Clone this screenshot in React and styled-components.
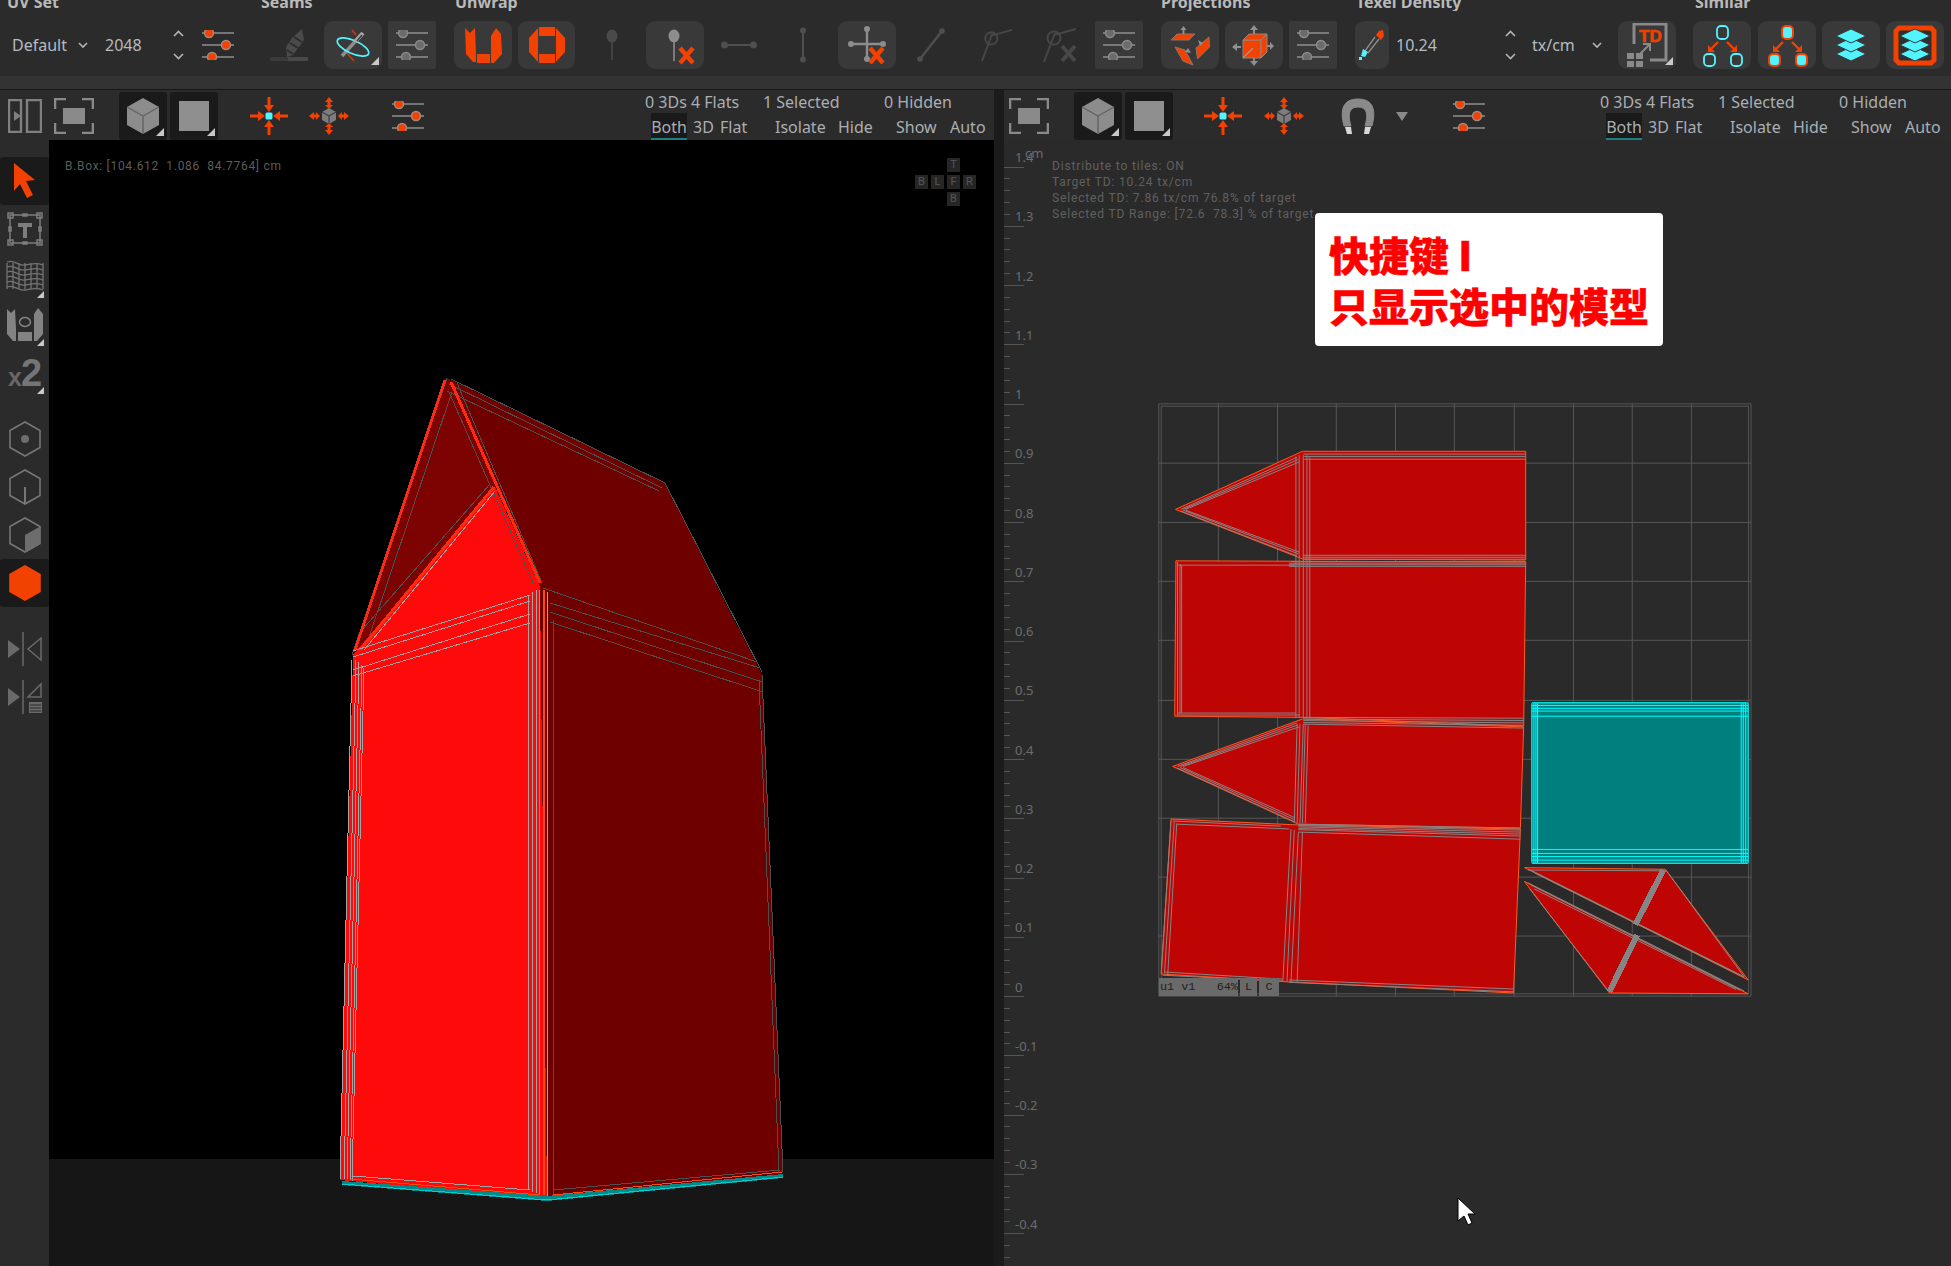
import React from 'react';
import styled, { createGlobalStyle } from 'styled-components';

const OR = '#f24100', CY = '#52f4ff', GR = '#8a8a8a', DG = '#4c4c4c';

const Global = createGlobalStyle`
  html, body { margin: 0; padding: 0; background: #2b2b2b; overflow: hidden; }
  * { box-sizing: border-box; }
`;
const Page = styled.div`
  width: 1951px; height: 1266px; display: flex; flex-direction: column; overflow: hidden;
  background: #2b2b2b; font-family: "Noto Sans", "Noto Sans CJK SC", sans-serif; color: #b4bbc0;
`;
const TopBar = styled.header`
  height: 90px; flex: none; background: #2b2b2b; display: flex; flex-direction: column;
  border-bottom: 1px solid #171717;
`;
const LabelRow = styled.div`
  height: 11px; display: flex; padding-left: 7px; overflow: hidden; flex: none;
`;
const GroupLabel = styled.span`
  width: ${p => p.$w || 120}px; flex: none; font-size: 16px; font-weight: 700; line-height: 16px;
  margin-top: -6px; color: #b9b9b9; white-space: nowrap;
`;
const ToolRow = styled.div`
  height: 48px; margin-top: 10px; display: flex; align-items: center; flex: none;
`;
const Strip = styled.div` margin-top: 7px; height: 13px; background: #333; flex: none; `;
const Tool = styled.div`
  position: relative; flex: none; width: ${p => p.$w}px; height: 48px; margin-left: ${p => p.$ml || 0}px;
  display: flex; align-items: center; justify-content: center;
  background: ${p => ({ round: '#393939', square: '#393939', dark: '#1a1a1a' }[p.$v] || 'transparent')};
  border-radius: ${p => ({ round: '9px', square: '2px', dark: '3px' }[p.$v] || '0')};
  ${p => p.$corner ? `&::after { content: ''; position: absolute; right: 3px; bottom: 4px; width: 0; height: 0;
    border-left: 8px solid transparent; border-bottom: 8px solid #c9c9c9; }` : ''}
`;
const Value = styled.span`
  flex: none; width: ${p => p.$w}px; margin-left: ${p => p.$ml || 0}px; font-size: 16px; white-space: nowrap;
`;
const Workspace = styled.main` flex: 1; display: flex; min-height: 0; `;
const LeftPane = styled.section` width: 994px; flex: none; display: flex; flex-direction: column; `;
const Divider = styled.div` width: 10px; flex: none; background: #1b1b1b; `;
const RightPane = styled.section` flex: 1; display: flex; flex-direction: column; min-width: 0; `;
const ViewBar = styled.div`
  height: 50px; flex: none; display: flex; align-items: flex-end; background: #2b2b2b;
`;
const StatsBox = styled.div`
  margin-left: ${p => p.$ml}px; flex: none; height: 50px; display: flex; flex-direction: column; font-size: 16px;
  color: #a9afb3; line-height: 24px; white-space: nowrap;
`;
const StatRow = styled.div` display: flex; height: ${p => p.$h}px; align-items: center; `;
const StatCell = styled.span` width: ${p => p.$w}px; flex: none; `;
const Tab = styled.span`
  flex: none; width: ${p => p.$w}px; margin-left: ${p => p.$ml || 0}px; height: 27px; line-height: 24px; padding-top: 2px;
  ${p => p.$on ? `background: #1a1a1a; border-bottom: 2px solid #1f7f80; text-align: center;` : ''}
`;
const Stage = styled.div` flex: 1; display: flex; min-height: 0; `;
const Rail = styled.nav`
  width: 49px; flex: none; background: #2b2b2b; padding-top: 17px; display: flex; flex-direction: column;
`;
const RailItem = styled.div`
  position: relative; height: 48px; flex: none; display: flex; align-items: center; justify-content: center;
  margin-top: ${p => p.$mt || 0}px; background: ${p => p.$on ? '#1a1a1a' : 'transparent'}; border-radius: 3px;
  ${p => p.$corner ? `&::after { content: ''; position: absolute; right: 5px; bottom: 3px; width: 0; height: 0;
    border-left: 7px solid transparent; border-bottom: 7px solid #c9c9c9; }` : ''}
`;
const TimesTwo = styled.span`
  font-family: "Liberation Sans", sans-serif; font-weight: 700; color: #757575; font-size: 38px; line-height: 1; letter-spacing: -1px;
  & > small { font-size: 25px; color: #666; }
`;
const Viewport = styled.div` position: relative; flex: 1; display: flex; flex-direction: column; overflow: hidden; `;
const Sky = styled.div` height: 1019px; background: #000; flex: none; `;
const Floor = styled.div` flex: 1; background: #161616; `;
const Drawing = styled.svg`
  position: absolute; left: ${p => p.$l || 0}px; top: ${p => p.$t || 0}px; display: block; overflow: hidden;
  shape-rendering: crispEdges;
  & * { vector-effect: non-scaling-stroke; }
`;
const BBox = styled.div`
  position: absolute; left: 16px; top: 18px; font: 12px/16px "Roboto", sans-serif; letter-spacing: .7px; color: #5c5c5c; white-space: pre;
`;
const NavCube = styled.div`
  position: absolute; left: 866px; top: 18px; display: grid; grid-template-columns: repeat(4, 13px);
  grid-auto-rows: 14px; gap: 3px; font: 11px/14px "Roboto", sans-serif; color: #565656; text-align: center;
`;
const NavFace = styled.span`
  grid-column: ${p => p.$c}; grid-row: ${p => p.$r}; background: #262626;
`;
const UVCanvas = styled.div` position: relative; flex: 1; background: #2a2a2a; overflow: hidden; `;
const Info = styled.div`
  position: absolute; left: 48px; top: 18px; font: 12px/16px "Roboto", sans-serif; letter-spacing: .85px; color: #606060; white-space: pre;
`;
const Callout = styled.div`
  position: absolute; left: 311px; top: 73px; width: 348px; height: 133px; background: #fff; border-radius: 4px;
  padding: 16px 0 0 14px; color: #fe0000; font: 900 40px/51px "Noto Sans CJK SC", sans-serif; white-space: nowrap;
  -webkit-text-stroke: .5px #fe0000;
`;
const UVTag = styled.div`
  position: absolute; left: 155px; top: 838px; height: 18px; display: flex; gap: 2px;
  font: 11.800px/18px "Liberation Mono", monospace; color: #1f1f1f;
`;
const TagCell = styled.span`
  width: ${p => p.$w}px; background: #6a6a6a; padding: 0 1px; white-space: pre; text-align: ${p => p.$c ? 'center' : 'left'};
`;
const Cursor = styled.svg` position: absolute; left: 452px; top: 1057px; `;

/* ---------- icons ---------- */
const Chevron = () => <svg width="10" height="7" viewBox="0 0 10 7"><path d="M1 1l4 4 4-4" fill="none" stroke="#b0b6ba" strokeWidth="1.6" /></svg>;
const Stepper = () => (
  <svg width="11" height="30" viewBox="0 0 11 30" fill="none" stroke="#b0b6ba" strokeWidth="1.6">
    <path d="M1 6l4.500-4.500L10 6M1 24l4.500 4.500L10 24" />
  </svg>
);
const Sliders = ({ tone = 'orange' }) => {
  const dot = tone === 'orange'
    ? { fill: OR, stroke: '#a38a80', strokeWidth: 1.5, r: 4.5 }
    : { fill: '#6c6c6c', stroke: '#8a8a8a', strokeWidth: 1.5, r: 4.5 };
  return (
    <svg width="34" height="30" viewBox="0 0 34 30">
      <path d="M1 3h32M1 15h32M1 27h32" stroke="#8f8f8f" strokeWidth="1.6" />
      <circle cx="8" cy="3" {...dot} /><circle cx="25" cy="15" {...dot} /><circle cx="11" cy="27" {...dot} />
    </svg>
  );
};
const Feather = () => (
  <svg width="38" height="34" viewBox="0 0 38 34">
    <path d="M0 29h18v4H0z" fill="#3a3a3a" /><path d="M18 29h20v4H18z" fill="#484848" />
    <path d="M32 1l2 11-11 15-6 2-1-10 6-9z" fill="#4a4a4a" />
    <path d="M24 9l8 5M20 15l8 5M17 22l6 4" stroke="#2b2b2b" strokeWidth="1.6" />
  </svg>
);
const Needle = () => (
  <svg width="58" height="48" viewBox="0 0 58 48">
    <path d="M28 9l4 5M23 32l7 8" stroke="#c43a10" strokeWidth="1.8" />
    <path d="M38 13L18 35" stroke="#8d8d8d" strokeWidth="3.400" />
    <ellipse cx="29" cy="26" rx="17" ry="6.500" transform="rotate(24 29 26)" fill="none" stroke={CY} strokeWidth="1.700" />
    <path d="M39 12l-8 9" stroke="#a8a8a8" strokeWidth="4" /><path d="M38 14l-5 6" stroke="#393939" strokeWidth="1.400" />
  </svg>
);
const UIcon = () => (
  <svg width="37" height="36" viewBox="0 0 37 36" fill={OR}>
    <path d="M0 1l5 5 5-5 1 25v9H8L1 27z" /><path d="M12 27h13v9H12z" /><path d="M37 27l-8 9h-3V9l5-8 5 6z" />
  </svg>
);
const OIcon = () => (
  <svg width="36" height="36" viewBox="0 0 36 36" fill={OR}>
    <path d="M10 0h16v9H10zM10 27h16v9H10zM9 1v34L0 25V11zM27 1v34l9-10V11z" />
  </svg>
);
const Pin = () => (
  <svg width="24" height="38" viewBox="0 0 24 38">
    <path d="M12 10v24" stroke="#4a4a4a" strokeWidth="1.6" /><ellipse cx="12" cy="10" rx="5.500" ry="6.500" fill="#4a4a4a" />
  </svg>
);
const Cross = ({ x, y }) => <path d={`M${x + 1} ${y + 1}l13 15M${x + 14} ${y + 1}l-13 15`} stroke={OR} strokeWidth="4.500" fill="none" />;
const PinX = () => (
  <svg width="58" height="48" viewBox="0 0 58 48">
    <path d="M28 15v25" stroke="#8d8d8d" strokeWidth="1.6" /><ellipse cx="28" cy="15" rx="5.500" ry="6.500" fill="#8d8d8d" />
    <Cross x={33} y={26} />
  </svg>
);
const HBar = () => (
  <svg width="36" height="10" viewBox="0 0 36 10" fill="#4f4f4f"><path d="M2 4h32v2H2z" /><circle cx="3.500" cy="5" r="3.500" /><circle cx="32.500" cy="5" r="3.500" /></svg>
);
const VBar = () => (
  <svg width="10" height="36" viewBox="0 0 10 36" fill="#4f4f4f"><path d="M4 2h2v32H4z" /><circle cx="5" cy="3.500" r="3" /><circle cx="5" cy="32.500" r="3" /></svg>
);
const PlusX = () => (
  <svg width="38" height="38" viewBox="0 0 38 38">
    <path d="M19 2v32M2 18h34" stroke="#8d8d8d" strokeWidth="2.400" />
    <g fill="#8d8d8d"><circle cx="19" cy="3" r="3" /><circle cx="19" cy="33" r="3" /><circle cx="3" cy="18" r="3" /><circle cx="35" cy="18" r="3" /></g>
    <Cross x={21} y={21} />
  </svg>
);
const Diag = () => <svg width="28" height="34" viewBox="0 0 28 34"><path d="M3 31L25 3" stroke="#4f4f4f" strokeWidth="2.400" /><circle cx="3" cy="31" r="2.800" fill="#4f4f4f" /><circle cx="25" cy="3" r="2.800" fill="#4f4f4f" /></svg>;
const Loop = ({ x }) => (
  <svg width="36" height="36" viewBox="0 0 36 36" fill="none" stroke="#474747" strokeWidth="2">
    <circle cx="12" cy="11" r="6.500" /><path d="M2 35L13 6M12 8l22-6" />
    {x && <path d="M20 19l13 15M33 19L20 34" strokeWidth="4" />}
  </svg>
);
const Proj1 = () => (
  <svg width="58" height="48" viewBox="0 0 58 48">
    <g fill={OR} stroke="#8b7468" strokeWidth="1">
      <path d="M16 13h18l-6 6H10z" /><path d="M48 16l.5 10-12 12L35 27z" /><path d="M14 26l10 3 8 15-10-4z" />
    </g>
    <path d="M22.500 5l-3 4h2v4h2V9h2zM37 19l5 3-3 3zM30 32l-6-1 3-4z" fill="#8f8f8f" />
  </svg>
);
const Proj2 = () => (
  <svg width="58" height="48" viewBox="0 0 58 48">
    <path d="M29 4l-4 5h3v6h2V9h3zM28 37v3h-3l4 5 4-5h-3v-3zM16 25h-4v-3l-5 4 5 4v-3h4zM41 24h4v-3l4 4-4 4v-3h-4z" fill="#8f8f8f" />
    <g fill={OR} stroke="#9a8478" strokeWidth="1"><path d="M18 19h18v18H18z" /><path d="M18 19l6-6h18l-6 6zM36 19l6-6v18l-6 6z" /></g>
    <path d="M18 37l10-10" stroke="#a79487" strokeWidth="1.500" />
  </svg>
);
const Dropper = () => (
  <svg width="34" height="48" viewBox="0 0 34 48">
    <path d="M20 16L10 30M24 18L13 32" stroke="#8d8d8d" strokeWidth="1.300" fill="none" />
    <path d="M21 14l5 5 3-4-1-6-4 1z" fill={OR} />
    <path d="M8 28l5 3-3 5-4-1z" fill={CY} /><path d="M4 36h3v3H4z" fill={CY} />
  </svg>
);
const TDIcon = () => (
  <svg width="42" height="44" viewBox="0 0 42 44">
    <path d="M8 21V1h32v36H24" fill="none" stroke="#8a8a8a" strokeWidth="3" />
    <path d="M1 30h7v6H1zM10 30h7v6h-7zM1 38h7v6H1zM10 38h7v6h-7z" fill="#8a8a8a" />
    <path d="M14 31l9-9M17 21h7v7" fill="none" stroke="#8a8a8a" strokeWidth="2" />
    <text x="13" y="19" fontFamily="Liberation Sans" fontWeight="700" fontSize="17" fill={OR} stroke={OR} strokeWidth=".6">TD</text>
  </svg>
);
const Similar = ({ filled }) => {
  const box = filled ? { fill: CY, stroke: OR, strokeWidth: 2 } : { fill: 'none', stroke: CY, strokeWidth: 1.8 };
  return (
    <svg width="58" height="48" viewBox="0 0 58 48">
      <rect x="24" y="5" width="11" height="13" rx="4" {...box} />
      <rect x="11" y="33" width="11" height="12" rx="4" {...box} /><rect x="38" y="33" width="11" height="12" rx="4" {...box} />
      <path d="M25 21l-7 7M34 21l7 7" stroke={OR} strokeWidth="2.400" />
      <path d="M15 24v7h7zM44 24v7h-7z" fill={OR} />
    </svg>
  );
};
const Layers = ({ framed }) => (
  <svg width="58" height="48" viewBox="0 0 58 48">
    {framed && <path d="M13 7h32l3 3v29l-3 3H13l-3-3V10z" fill="#2f2f2f" stroke={OR} strokeWidth="5" />}
    <path d="M29 26l15 7-15 7-15-7z" fill={CY} stroke="#393939" />
    <path d="M29 17l15 7-15 7-15-7z" fill={CY} stroke="#393939" />
    <path d="M29 8l15 7-15 7-15-7z" fill={CY} stroke="#393939" />
  </svg>
);
const PanelToggle = () => (
  <svg width="34" height="34" viewBox="0 0 34 34" fill="none" stroke="#7f7f7f" strokeWidth="2.400">
    <path d="M1 1h12v32H1zM19 1h14v32H19z" /><path d="M6 12l7 5-7 5z" fill="#7f7f7f" stroke="none" />
  </svg>
);
const Focus = () => (
  <svg width="40" height="36" viewBox="0 0 40 36">
    <path d="M1 11V1h11M28 1h11v10M39 25v10H28M12 35H1V25" fill="none" stroke="#8a8a8a" strokeWidth="2.600" />
    <path d="M9 10h22v16H9z" fill="#8a8a8a" />
  </svg>
);
const Cube = () => (
  <svg width="36" height="38" viewBox="0 0 36 38">
    <path d="M18 1l16 9v18l-16 9-16-9V10z" fill="#8c8c8c" />
    <path d="M18 19v18M18 19L2 10M18 19l16-9" stroke="#626262" strokeWidth="1.400" fill="none" />
  </svg>
);
const Square = () => <svg width="30" height="30" viewBox="0 0 30 30"><path d="M0 0h30v30H0z" fill="#8f8f8f" /></svg>;
const Arrows = ({ c }) => (
  <g fill={OR} stroke="none">
    <path d={`M${c - 1.500} 1h3v8h3.500l-5 7-5-7h3.500z`} /><path d={`M${c - 1.500} ${2 * c - 1}h3v-8h3.500l-5-7-5 7h3.500z`} />
    <path d={`M1 ${c - 1.500}v3h8v3.500l7-5-7-5v3.500z`} /><path d={`M${2 * c - 1} ${c - 1.500}v3h-8v3.500l-7-5 7-5v3.500z`} />
  </g>
);
const Target = () => (
  <svg width="40" height="40" viewBox="0 0 40 40"><Arrows c={20} /><rect x="16.500" y="16.500" width="7" height="7" rx="1.500" fill={CY} /></svg>
);
const TargetCube = () => (
  <svg width="40" height="40" viewBox="0 0 40 40">
    <path d="M20 1l-4 5h2.500v3H16l4 4 4-4h-2.500V6H24zM20 39l-4-5h2.500v-3H16l4-4 4 4h-2.500v3H24zM0 20l5-4v2.500h2V16l4 4-4 4v-2.500H5V24zM40 20l-5-4v2.500h-2V16l-4 4 4 4v-2.500h2V24z" fill={OR} />
    <path d="M20 12l7 4v8l-7 4-7-4v-8z" fill="#7d7d7d" /><path d="M20 20v8M20 20l-7-4M20 20l7-4" stroke="#3d3d3d" strokeWidth="1.200" fill="none" />
  </svg>
);
const Magnet = () => (
  <svg width="36" height="38" viewBox="0 0 36 38">
    <path d="M4 29C0 14 2 2 18 2s18 12 14 27h-7c3-10 3-19-7-19s-10 9-7 19z" fill="#8a8a8a" stroke="#8a8a8a" />
    <path d="M5 30h6l1 7H7zM25 30h6l-2 7h-5z" fill="#d8d8d8" />
  </svg>
);
const DownTri = () => <svg width="12" height="9" viewBox="0 0 12 9"><path d="M0 0h12L6 9z" fill="#8a8a8a" /></svg>;
const SelectArrow = () => (
  <svg width="24" height="36" viewBox="0 0 24 36"><path d="M1 0l21 17-9 1 7 14-6 3-7-14-6 7z" fill={OR} /></svg>
);
const TFrame = () => (
  <svg width="36" height="34" viewBox="0 0 36 34" fill="none" stroke="#7d7d7d" strokeWidth="1.500">
    <path d="M3 3h30v28H3z" /><path d="M1 1h5v5H1zM30 1h5v5h-5zM1 28h5v5H1zM30 28h5v5h-5z" />
    <path d="M16 2h4v2h-4zM16 30h4v2h-4zM2 15h2v4H2zM32 15h2v4h-2z" fill="#7d7d7d" />
    <path d="M11 11h14v4h-5v11h-4V15h-5z" fill="#7d7d7d" stroke="none" />
  </svg>
);
const Wave = () => (
  <svg width="38" height="34" viewBox="0 0 38 34" fill="none" stroke="#737373" strokeWidth="1.300">
    {[0, 5, 10, 15, 20, 25].map(o => <path key={o} d={`M1 ${2 + o}c8-3 10 4 18 3s10-3 18 0`} />)}
    {[1, 7, 13, 19, 25, 31, 37].map(x => <path key={x} d={`M${x} 3v26`} />)}
  </svg>
);
const UnwrapRail = () => (
  <svg width="36" height="34" viewBox="0 0 36 34" fill="#838383">
    <path d="M0 1l4 4 4-4 1 20v12H6l-6-7zM11 24h14v9H11zM36 26l-6 7h-3V6l4-6 5 6z" />
    <ellipse cx="18" cy="14" rx="5.500" ry="4.500" fill="none" stroke="#838383" strokeWidth="1.500" />
  </svg>
);
const Hex = ({ mode }) => {
  const c = mode === 'on' ? OR : '#767676';
  return (
    <svg width="32" height="36" viewBox="0 0 32 36">
      <path d="M16 1l15 8.500v17L16 35 1 26.500v-17z" fill={mode === 'on' ? OR : 'none'} stroke={c} strokeWidth="1.600" />
      {mode === 'dot' && <circle cx="16" cy="18" r="4" fill="#6d6d6d" />}
      {mode === 'edge' && <path d="M16 18v17" stroke={c} strokeWidth="2" />}
      {mode === 'face' && <path d="M16 18l15-8.500v17L16 35z" fill="#6d6d6d" />}
    </svg>
  );
};
const Mirror = ({ list }) => (
  <svg width="36" height="34" viewBox="0 0 36 34">
    <path d="M1 8l12 9-12 9z" fill="#6a6a6a" /><path d="M16 0v34" stroke="#6a6a6a" strokeWidth="1.500" />
    {list ? (
      <g><path d="M34 4v13H21z" fill="none" stroke="#6a6a6a" strokeWidth="1.500" /><path d="M22 22h13v11H22z" fill="#6a6a6a" /><path d="M23 25h11M23 28h11M23 31h11" stroke="#2b2b2b" /></g>
    ) : <path d="M34 6v22L21 17z" fill="none" stroke="#6a6a6a" strokeWidth="1.500" />}
  </svg>
);

const Stats = ({ ml }) => (
  <StatsBox $ml={ml}>
    <StatRow $h={23}>
      <StatCell $w={118}>0 3Ds 4 Flats</StatCell><StatCell $w={121}>1 Selected</StatCell><StatCell $w={80}>0 Hidden</StatCell>
    </StatRow>
    <StatRow $h={27}>
      <Tab $on $w={36} $ml={6}>Both</Tab><Tab $w={27} $ml={6}>3D</Tab><Tab $w={55}>Flat</Tab>
      <Tab $w={63}>Isolate</Tab><Tab $w={58}>Hide</Tab><Tab $w={54}>Show</Tab><Tab $w={40}>Auto</Tab>
    </StatRow>
  </StatsBox>
);

/* ---------- 3D model, in page coordinates ---------- */
const lines = (list, color, w = 1) => list.map((l, i) => (
  <line key={color + w + i} x1={l[0]} y1={l[1]} x2={l[2]} y2={l[3]} stroke={color} strokeWidth={w} />
));
const LIGHT = [
  [353, 651, 530, 595], [353, 657, 530, 601], [353, 670, 530, 614], [353, 676, 530, 623],
  [528, 595, 528, 1190], [532, 592, 532, 1192], [536, 590, 536, 1193], [539, 590, 539, 1194], [547, 592, 547, 1197],
  [352, 660, 340, 1180], [356, 660, 344, 1180], [359, 662, 347, 1180], [362, 665, 350, 1181], [364, 668, 352, 1182],
  [353, 1176, 530, 1190], [364, 650, 495, 491],
];
const DARK = [
  [543, 588, 757, 662], [550, 603, 760, 668], [550, 612, 762, 682], [550, 622, 763, 692],
  [553, 620, 553, 1197], [553, 1190, 780, 1170],
  [451, 379, 665, 483], [449, 384, 662, 488], [447, 391, 659, 491],
  [665, 483, 762, 672], [762, 675, 783, 1172], [759, 680, 779, 1172],
  [447, 378, 352, 655], [452, 392, 368, 640], [490, 484, 362, 630], [449, 392, 534, 585], [457, 383, 542, 583],
];
const REDS = [[445, 380, 355, 650], [451, 382, 540, 583], [494, 487, 360, 650]];
const ORANGE = [[350, 1179, 540, 1195], [553, 1195, 782, 1172], [543, 590, 543, 1195], [544, 590, 544, 1195]];
const Model = () => (
  <Drawing $l={0} $t={0} width="945" height="1126" viewBox="49 140 945 1126">
    <polygon points="447,378 496,487 357,650 353,655" fill="#7d0202" />
    <polygon points="447,378 665,483 762,675 783,1175 547,1199 540,587" fill="#6e0000" />
    <polygon points="353,655 495,487 540,587 547,1199 340,1180" fill="#ff0a0a" />
    {lines(DARK, '#4f4f4f')}
    {lines(REDS, '#ff2a10', 3)}
    {lines(LIGHT, '#a5a5a5')}
    {lines(ORANGE, '#ff4a10')}
    <polygon points="342,1181 547,1196 783,1174 783,1178 547,1201 342,1185" fill="#008a8a" />
    <polyline points="342,1184 547,1200 783,1177" fill="none" stroke="#00cfcf" />
  </Drawing>
);

/* ---------- UV layout, in 1568-unit space over a 640x620 box ---------- */
const GRID_X = [192, 337, 481, 626, 770, 917, 1062, 1206, 1351];
const GRID_Y = [185, 335, 484, 633, 785, 934, 1083, 1232, 1381];
const UV_GRAY = [
  [100, 302, 385, 170], [106, 302, 387, 176], [112, 302, 390, 182], [100, 306, 385, 420], [106, 304, 387, 414], [112, 304, 390, 410],
  [400, 162, 945, 162], [402, 168, 945, 168], [402, 175, 945, 175],
  [382, 168, 382, 830], [390, 165, 390, 830], [400, 165, 400, 830], [409, 165, 409, 830], [416, 170, 416, 830],
  [400, 418, 945, 418], [400, 423, 945, 423], [400, 428, 945, 428], [370, 434, 945, 434], [365, 438, 945, 438], [365, 442, 945, 442], [365, 446, 945, 446],
  [92, 435, 92, 822], [98, 440, 98, 818], [102, 443, 102, 816], [92, 443, 380, 443], [92, 817, 382, 817], [90, 822, 390, 822],
  [400, 828, 940, 830], [400, 832, 940, 836], [400, 836, 940, 842], [400, 841, 940, 848], [400, 845, 940, 855],
  [92, 952, 385, 842], [99, 952, 387, 847], [106, 952, 390, 852], [92, 956, 378, 1092], [99, 955, 379, 1087], [106, 955, 380, 1082],
  [385, 845, 378, 1095], [392, 845, 385, 1095], [400, 845, 392, 1095], [405, 845, 398, 1095], [412, 848, 405, 1095],
  [388, 1098, 932, 1108], [388, 1102, 932, 1113], [388, 1105, 932, 1118], [388, 1109, 932, 1123], [388, 1112, 932, 1128], [388, 1118, 932, 1136],
  [76, 1090, 52, 1475], [84, 1092, 60, 1475], [90, 1096, 68, 1478], [80, 1090, 345, 1103], [90, 1098, 365, 1110],
  [60, 1472, 350, 1490], [55, 1480, 350, 1495], [370, 1110, 350, 1495], [378, 1112, 360, 1497], [388, 1118, 370, 1497], [398, 1118, 385, 1497],
  [365, 1492, 915, 1515], [365, 1498, 915, 1522],
  [950, 1214, 1290, 1216], [952, 1212, 1480, 1484], [960, 1216, 1470, 1480], [968, 1222, 1460, 1474],
  [950, 1246, 1480, 1520], [958, 1252, 1470, 1518], [966, 1262, 1460, 1516], [955, 1262, 1148, 1520], [1290, 1216, 1480, 1484],
];
const UVLayout = () => (
  <Drawing $l={136} $t={250} width="640" height="620" viewBox="0 0 1568 1568" preserveAspectRatio="none">
    <g stroke="#565656" fill="none">
      <rect x="46" y="35" width="1451" height="1498" />
      <rect x="52" y="41" width="1439" height="1486" />
      {GRID_X.map(x => <line key={x} x1={x} y1="35" x2={x} y2="1533" />)}
      {GRID_Y.map(y => <line key={y} x1="46" y1={y} x2="1497" y2={y} />)}
    </g>
    <g fill="#bf0404" stroke="#ff5a1e">
      <polygon points="87,302 398,155 945,155 945,430 400,428" />
      <polygon points="88,432 945,435 940,850 400,828 85,825" />
      <polygon points="80,952 398,832 940,852 932,1108 388,1098" />
      <polygon points="76,1085 388,1100 932,1110 915,1525 365,1497 52,1477" />
      <polygon points="942,1208 1287,1212 1490,1492" />
      <polygon points="942,1243 1490,1527 1150,1525" />
    </g>
    <g stroke="#858585">
      {UV_GRAY.map((l, i) => <line key={i} x1={l[0]} y1={l[1]} x2={l[2]} y2={l[3]} />)}
      <line x1="1282" y1="1214" x2="1214" y2="1352" strokeWidth="6" />
      <line x1="1218" y1="1378" x2="1150" y2="1522" strokeWidth="6" />
    </g>
    <rect x="959" y="790" width="532" height="408" rx="8" fill="#007f7f" />
    <g stroke="#00ffff">
      {[960, 965, 970, 974, 1473, 1478, 1484, 1490].map(x => <line key={x} x1={x} y1="792" x2={x} y2="1196" />)}
      {[791, 798, 805, 812, 825, 1162, 1172, 1180, 1189, 1197].map(y => <line key={y} x1="960" y1={y} x2="1490" y2={y} />)}
    </g>
  </Drawing>
);

const RULER_LABELS = [1.4, 1.3, 1.2, 1.1, 1, 0.9, 0.8, 0.7, 0.6, 0.5, 0.4, 0.3, 0.2, 0.1, 0, -0.1, -0.2, -0.3, -0.4];
const rulerY = v => 404 + (1 - v) * 592.5;
const RulerTicks = () => {
  const ticks = [];
  for (let i = -24; i <= 70; i += 1) {
    const y = rulerY(i / 50);
    const len = i % 5 === 0 ? 20 : 6;
    ticks.push(<line key={i} x1="1004" y1={y} x2={1004 + len} y2={y} stroke="#545454" />);
  }
  return (
    <Drawing $l={0} $t={0} width="60" height="1126" viewBox="1004 140 60 1126">
      {ticks}
      <g fontFamily="Noto Sans" fontSize="13" fill="#6c6c6c" style={{ shapeRendering: 'auto' }}>
        {RULER_LABELS.map(v => <text key={v} x="1015" y={rulerY(v) - 5}>{v}</text>)}
        <text x="1025" y="158">cm</text>
      </g>
    </Drawing>
  );
};

export default function App() {
  return (
    <Page>
      <Global />
      <TopBar>
        <LabelRow>
          <GroupLabel $w={254}>UV Set</GroupLabel><GroupLabel $w={194}>Seams</GroupLabel><GroupLabel $w={706}>Unwrap</GroupLabel>
          <GroupLabel $w={195}>Projections</GroupLabel><GroupLabel $w={339}>Texel Density</GroupLabel><GroupLabel>Similar</GroupLabel>
        </LabelRow>
        <ToolRow>
          <Value $ml={12} $w={56}>Default</Value>
          <Tool $w={10} $ml={10}><Chevron /></Tool>
          <Value $ml={17} $w={36}>2048</Value>
          <Tool $w={11} $ml={32}><Stepper /></Tool>
          <Tool $w={34} $ml={17}><Sliders /></Tool>
          <Tool $w={38} $ml={35}><Feather /></Tool>
          <Tool $w={58} $ml={16} $v="round" $corner><Needle /></Tool>
          <Tool $w={48} $ml={6} $v="square"><Sliders tone="gray" /></Tool>
          <Tool $w={58} $ml={18} $v="round"><UIcon /></Tool>
          <Tool $w={57} $ml={6} $v="round"><OIcon /></Tool>
          <Tool $w={24} $ml={25}><Pin /></Tool>
          <Tool $w={58} $ml={22} $v="round"><PinX /></Tool>
          <Tool $w={36} $ml={17}><HBar /></Tool>
          <Tool $w={20} $ml={36}><VBar /></Tool>
          <Tool $w={58} $ml={25} $v="round"><PlusX /></Tool>
          <Tool $w={28} $ml={21}><Diag /></Tool>
          <Tool $w={34} $ml={35}><Loop /></Tool>
          <Tool $w={36} $ml={28}><Loop x /></Tool>
          <Tool $w={48} $ml={17} $v="square"><Sliders tone="gray" /></Tool>
          <Tool $w={58} $ml={18} $v="round"><Proj1 /></Tool>
          <Tool $w={58} $ml={6} $v="round"><Proj2 /></Tool>
          <Tool $w={48} $ml={6} $v="square"><Sliders tone="gray" /></Tool>
          <Tool $w={34} $ml={18} $v="round"><Dropper /></Tool>
          <Value $ml={7} $w={40}>10.24</Value>
          <Tool $w={11} $ml={69}><Stepper /></Tool>
          <Value $ml={16} $w={45}>tx/cm</Value>
          <Tool $w={10} $ml={15}><Chevron /></Tool>
          <Tool $w={58} $ml={16} $v="round" $corner><TDIcon /></Tool>
          <Tool $w={58} $ml={17} $v="round"><Similar /></Tool>
          <Tool $w={58} $ml={7} $v="round"><Similar filled /></Tool>
          <Tool $w={58} $ml={6} $v="round"><Layers /></Tool>
          <Tool $w={58} $ml={6} $v="round"><Layers framed /></Tool>
        </ToolRow>
        <Strip />
      </TopBar>
      <Workspace>
        <LeftPane>
          <ViewBar>
            <Tool $w={34} $ml={8}><PanelToggle /></Tool>
            <Tool $w={40} $ml={12}><Focus /></Tool>
            <Tool $w={48} $ml={25} $v="dark" $corner><Cube /></Tool>
            <Tool $w={48} $ml={3} $v="dark" $corner><Square /></Tool>
            <Tool $w={40} $ml={31}><Target /></Tool>
            <Tool $w={40} $ml={20}><TargetCube /></Tool>
            <Tool $w={34} $ml={42}><Sliders /></Tool>
            <Stats ml={220} />
          </ViewBar>
          <Stage>
            <Rail>
              <RailItem $on><SelectArrow /></RailItem>
              <RailItem><TFrame /></RailItem>
              <RailItem $corner><Wave /></RailItem>
              <RailItem $corner><UnwrapRail /></RailItem>
              <RailItem $corner><TimesTwo><small>x</small>2</TimesTwo></RailItem>
              <RailItem $mt={18}><Hex mode="dot" /></RailItem>
              <RailItem><Hex mode="edge" /></RailItem>
              <RailItem><Hex mode="face" /></RailItem>
              <RailItem $on><Hex mode="on" /></RailItem>
              <RailItem $mt={18}><Mirror /></RailItem>
              <RailItem><Mirror list /></RailItem>
            </Rail>
            <Viewport>
              <Sky /><Floor />
              <Model />
              <BBox>B.Box: [104.612  1.086  84.7764] cm</BBox>
              <NavCube>
                <NavFace $c={3} $r={1}>T</NavFace>
                <NavFace $c={1} $r={2}>B</NavFace><NavFace $c={2} $r={2}>L</NavFace>
                <NavFace $c={3} $r={2}>F</NavFace><NavFace $c={4} $r={2}>R</NavFace>
                <NavFace $c={3} $r={3}>B</NavFace>
              </NavCube>
            </Viewport>
          </Stage>
        </LeftPane>
        <Divider />
        <RightPane>
          <ViewBar>
            <Tool $w={40} $ml={5}><Focus /></Tool>
            <Tool $w={48} $ml={25} $v="dark" $corner><Cube /></Tool>
            <Tool $w={48} $ml={3} $v="dark" $corner><Square /></Tool>
            <Tool $w={40} $ml={30}><Target /></Tool>
            <Tool $w={40} $ml={21}><TargetCube /></Tool>
            <Tool $w={36} $ml={36}><Magnet /></Tool>
            <Tool $w={12} $ml={20}><DownTri /></Tool>
            <Tool $w={34} $ml={44}><Sliders /></Tool>
            <Stats ml={114} />
          </ViewBar>
          <UVCanvas>
            <RulerTicks />
            <UVLayout />
            <Info>{'Distribute to tiles: ON\nTarget TD: 10.24 tx/cm\nSelected TD: 7.86 tx/cm 76.8% of target\nSelected TD Range: [72.6  78.3] % of target'}</Info>
            <Callout>快捷键 I<br />只显示选中的模型</Callout>
            <UVTag>
              <TagCell $w={79}>{'u1 v1   64%'}</TagCell><TagCell $w={17} $c>L</TagCell><TagCell $w={20} $c>C</TagCell>
            </UVTag>
            <Cursor width="20" height="30" viewBox="0 0 20 30">
              <path d="M2 1v23l6-5 4 9 4-2-4-9h7z" fill="#fff" stroke="#000" strokeWidth="1" />
            </Cursor>
          </UVCanvas>
        </RightPane>
      </Workspace>
    </Page>
  );
}
